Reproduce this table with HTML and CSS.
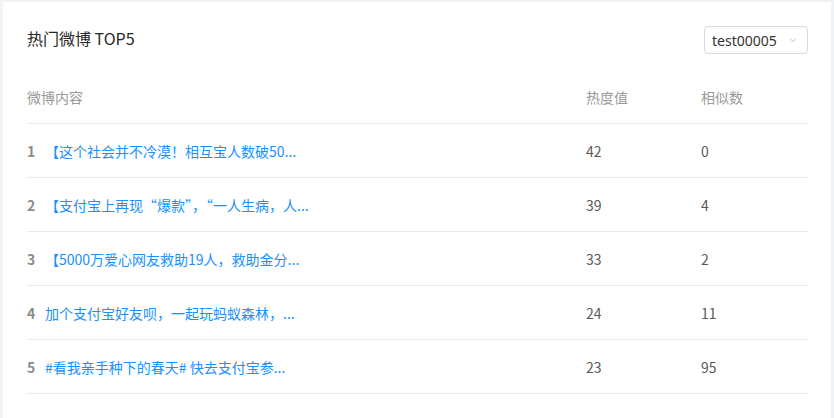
FILE: index.html
```html
<!DOCTYPE html>
<html lang="zh-CN">
<head>
<meta charset="utf-8">
<link rel="stylesheet" href="styles.css">
</head>
<body>
<div class="card">
  <div class="card-head">
    <div class="title">热门微博 TOP5</div>
    <div class="select">
      <span class="select-value">test00005</span>
      <svg class="arrow" width="10" height="10" viewBox="0 0 10 10"><path d="M2 3.5 L5 6.5 L8 3.5" fill="none" stroke="#bfbfbf" stroke-width="1"/></svg>
    </div>
  </div>
  <div class="table">
    <div class="row head">
      <div class="c-content">微博内容</div>
      <div class="c-heat">热度值</div>
      <div class="c-sim">相似数</div>
    </div>
    <div class="row">
      <div class="c-content"><span class="idx">1</span><a class="link">【这个社会并不冷漠！相互宝人数破50...</a></div>
      <div class="c-heat">42</div>
      <div class="c-sim">0</div>
    </div>
    <div class="row">
      <div class="c-content"><span class="idx">2</span><a class="link">【支付宝上再现“爆款”，“一人生病，人...</a></div>
      <div class="c-heat">39</div>
      <div class="c-sim">4</div>
    </div>
    <div class="row">
      <div class="c-content"><span class="idx">3</span><a class="link">【5000万爱心网友救助19人，救助金分...</a></div>
      <div class="c-heat">33</div>
      <div class="c-sim">2</div>
    </div>
    <div class="row">
      <div class="c-content"><span class="idx">4</span><a class="link">加个支付宝好友呗，一起玩蚂蚁森林，...</a></div>
      <div class="c-heat">24</div>
      <div class="c-sim">11</div>
    </div>
    <div class="row">
      <div class="c-content"><span class="idx">5</span><a class="link">#看我亲手种下的春天# 快去支付宝参...</a></div>
      <div class="c-heat">23</div>
      <div class="c-sim">95</div>
    </div>
  </div>
</div>
</body>
</html>
```
FILE: styles.css
```css
* { box-sizing: border-box; }
html, body { margin: 0; padding: 0; }
body {
  background: #f0f2f5;
  font-family: "Noto Sans CJK SC", "Noto Sans", sans-serif;
  font-size: 14px;
  color: #666;
  height: 418px;
  overflow: hidden;
}
.card {
  background: #fff;
  margin: 2px 3px 0 3px;
  padding: 24px 23px 0 24px;
  height: 416px;
}
.card-head {
  display: flex;
  align-items: center;
  justify-content: space-between;
  height: 28px;
  margin-bottom: 16px;
}
.title {
  font-size: 16px;
  color: #262626;
  margin-top: -4px;
}
.select {
  width: 104px;
  height: 28px;
  border: 1px solid #d9d9d9;
  border-radius: 4px;
  display: flex;
  align-items: center;
  justify-content: space-between;
  padding: 0 9px 0 7px;
}
.select-value { color: #333; font-size: 14px; font-family: "Noto Sans", "Noto Sans CJK SC", sans-serif; }
.arrow { display: block; }
.row {
  display: grid;
  grid-template-columns: 559px 115px 1fr;
  align-items: center;
  height: 54px;
  border-bottom: 1px solid #e8e8e8;
}
.row.head { color: #999; }
.c-content { display: flex; align-items: center; }
.idx {
  width: 18px;
  font-weight: 700;
  color: #8c8c8c;
}
.link {
  color: #1890ff;
  white-space: nowrap;
}
.c-heat, .c-sim { color: #595959; }
.row.head .c-heat, .row.head .c-sim { color: #999; }
```
